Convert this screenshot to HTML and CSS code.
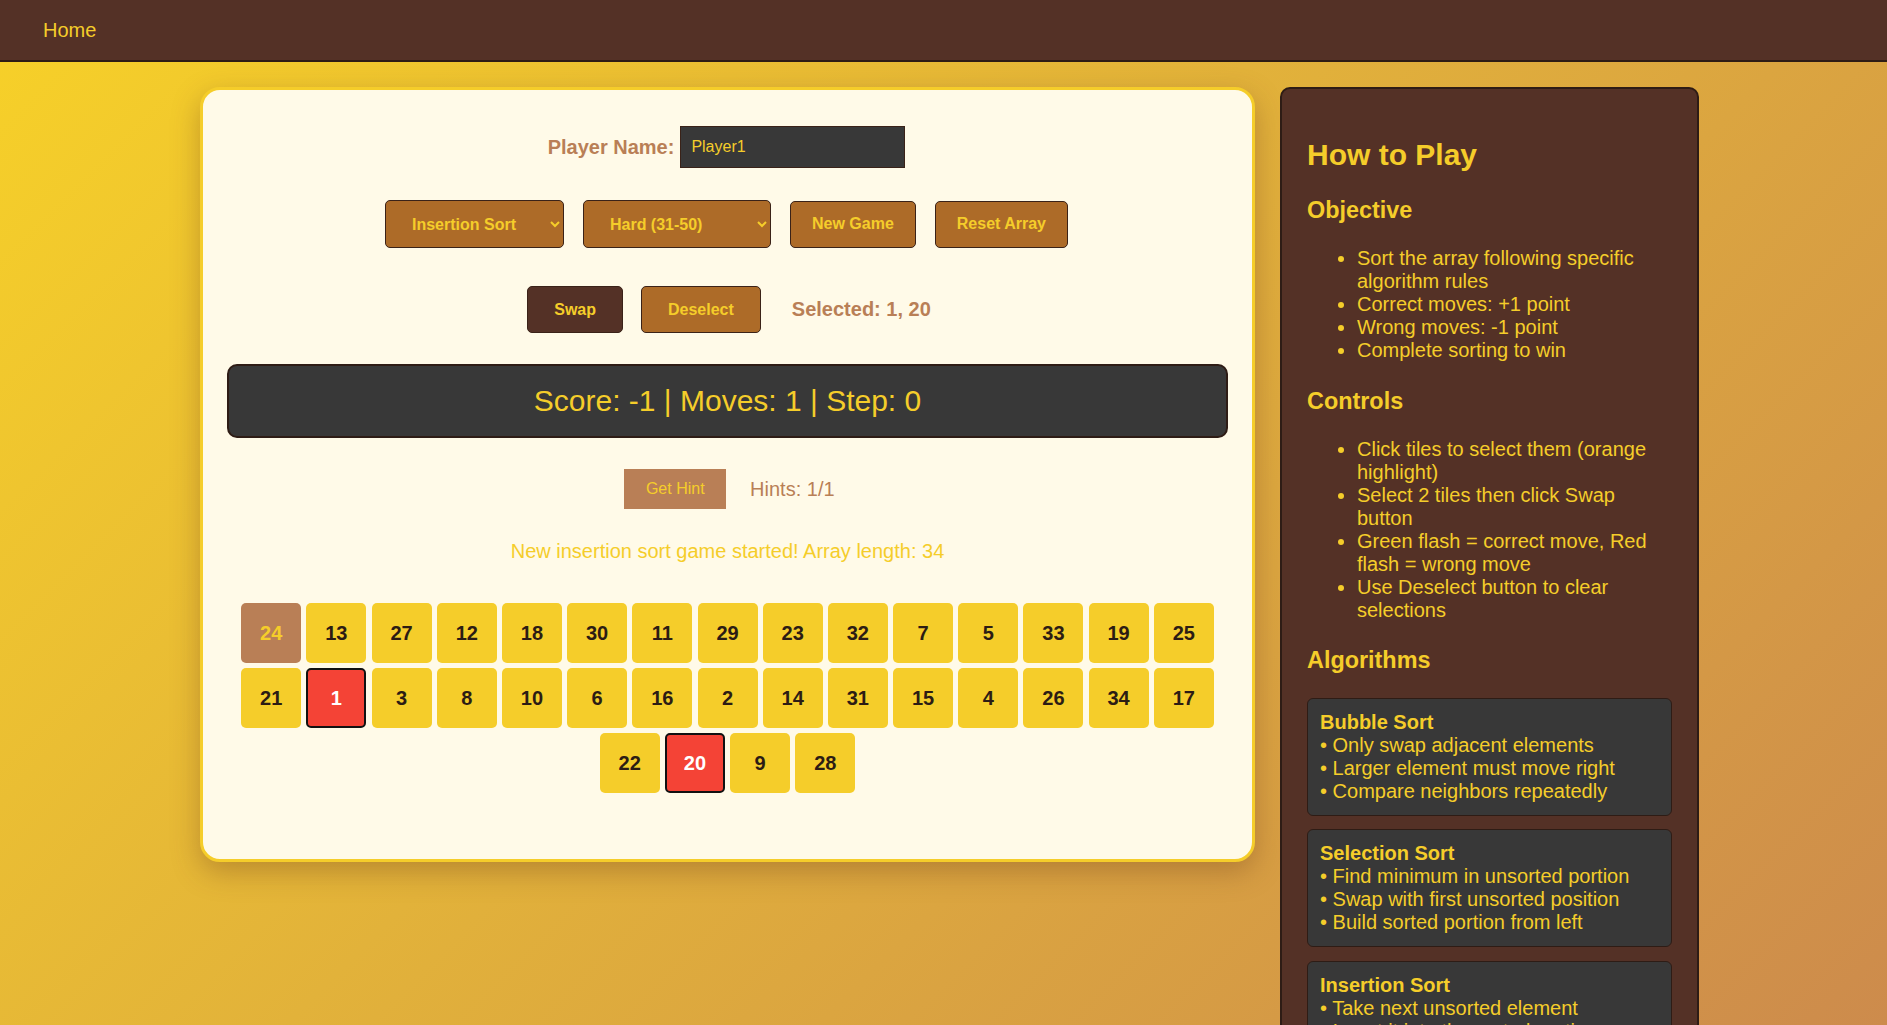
FILE: index.html
```html
<!DOCTYPE html>
<html lang="en">
<head>
<meta charset="utf-8">
<title>Sorting Game</title>
<link rel="stylesheet" href="styles.css">
</head>
<body>
<nav class="navbar">
  <a class="nav-link" href="#">Home</a>
</nav>
<div class="layout">
  <main class="game-panel">
    <div class="player-row">
      <label class="player-label" for="pname">Player Name:</label>
      <input id="pname" class="player-input" type="text" value="Player1">
    </div>
    <div class="controls-row">
      <select class="ctl-select algo-select">
        <option>Insertion Sort</option>
        <option>Bubble Sort</option>
        <option>Selection Sort</option>
      </select>
      <select class="ctl-select diff-select">
        <option>Hard (31-50)</option>
        <option>Easy (5-15)</option>
        <option>Medium (16-30)</option>
      </select>
      <button class="ctl-btn">New Game</button>
      <button class="ctl-btn">Reset Array</button>
    </div>
    <div class="action-row">
      <button class="act-btn swap-btn">Swap</button>
      <button class="act-btn deselect-btn">Deselect</button>
      <span class="selected-text">Selected: 1, 20</span>
    </div>
    <div class="score-bar">Score: -1 | Moves: 1 | Step: 0</div>
    <div class="hint-row">
      <button class="hint-btn">Get Hint</button>
      <span class="hint-count">Hints: 1/1</span>
    </div>
    <div class="message">New insertion sort game started! Array length: 34</div>
    <div class="tiles">
      <div class="tile current">24</div>
      <div class="tile">13</div>
      <div class="tile">27</div>
      <div class="tile">12</div>
      <div class="tile">18</div>
      <div class="tile">30</div>
      <div class="tile">11</div>
      <div class="tile">29</div>
      <div class="tile">23</div>
      <div class="tile">32</div>
      <div class="tile">7</div>
      <div class="tile">5</div>
      <div class="tile">33</div>
      <div class="tile">19</div>
      <div class="tile">25</div>
      <div class="tile">21</div>
      <div class="tile selected">1</div>
      <div class="tile">3</div>
      <div class="tile">8</div>
      <div class="tile">10</div>
      <div class="tile">6</div>
      <div class="tile">16</div>
      <div class="tile">2</div>
      <div class="tile">14</div>
      <div class="tile">31</div>
      <div class="tile">15</div>
      <div class="tile">4</div>
      <div class="tile">26</div>
      <div class="tile">34</div>
      <div class="tile">17</div>
      <div class="tile">22</div>
      <div class="tile selected">20</div>
      <div class="tile">9</div>
      <div class="tile">28</div>
    </div>
  </main>
  <aside class="sidebar">
    <h2 class="side-title">How to Play</h2>
    <h3 class="side-heading">Objective</h3>
    <ul class="side-list">
      <li>Sort the array following specific algorithm rules</li>
      <li>Correct moves: +1 point</li>
      <li>Wrong moves: -1 point</li>
      <li>Complete sorting to win</li>
    </ul>
    <h3 class="side-heading">Controls</h3>
    <ul class="side-list">
      <li>Click tiles to select them (orange highlight)</li>
      <li>Select 2 tiles then click Swap button</li>
      <li>Green flash = correct move, Red flash = wrong move</li>
      <li>Use Deselect button to clear selections</li>
    </ul>
    <h3 class="side-heading">Algorithms</h3>
    <div class="algo-card">
      <strong>Bubble Sort</strong><br>
      • Only swap adjacent elements<br>
      • Larger element must move right<br>
      • Compare neighbors repeatedly
    </div>
    <div class="algo-card">
      <strong>Selection Sort</strong><br>
      • Find minimum in unsorted portion<br>
      • Swap with first unsorted position<br>
      • Build sorted portion from left
    </div>
    <div class="algo-card">
      <strong>Insertion Sort</strong><br>
      • Take next unsorted element<br>
      • Insert it into the sorted portion<br>
      • Shift larger elements right
    </div>
  </aside>
</div>
</body>
</html>
```
FILE: styles.css
```css
html, body {
  margin: 0;
  padding: 0;
}
body {
  font-family: "Liberation Sans", Arial, sans-serif;
  font-size: 20px;
  min-height: 100vh;
  background: linear-gradient(135deg, #f7d128 0%, #e2b23a 45%, #cd8b4c 100%);
  background-attachment: fixed;
  padding-bottom: 40px;
  box-sizing: border-box;
}

.navbar {
  height: 60px;
  background: #543126;
  border-bottom: 2px solid #2e1c15;
  display: flex;
  align-items: center;
  padding-left: 43px;
}
.nav-link {
  color: #f5cd2a;
  font-size: 20px;
  text-decoration: none;
}

.layout {
  display: flex;
  align-items: flex-start;
  gap: 25px;
  margin: 25px 0 0 200px;
  width: 1499px;
}

.game-panel {
  box-sizing: border-box;
  width: 1055px;
  flex: none;
  background: #fffae8;
  border: 3px solid #f5cd2a;
  border-radius: 20px;
  padding: 36px 24px 66px;
  box-shadow: 0 10px 28px rgba(110, 60, 30, 0.35);
}

.player-row {
  display: flex;
  justify-content: center;
  align-items: center;
  gap: 6px;
  margin-left: -2px;
}
.player-label {
  font-weight: bold;
  font-size: 20px;
  color: #b97f56;
}
.player-input {
  box-sizing: border-box;
  width: 225px;
  height: 42px;
  background: #383838;
  border: 1px solid #3a2218;
  color: #f5cd2a;
  font-family: "Liberation Sans", Arial, sans-serif;
  font-size: 16px;
  padding: 0 10px;
  outline: none;
}

.controls-row {
  margin-top: 32px;
  display: flex;
  justify-content: center;
  align-items: center;
  gap: 19px;
  margin-left: -2px;
}
.ctl-select {
  box-sizing: border-box;
  height: 48px;
  background-color: #ad6b28;
  color: #f5cd2a;
  border: 1px solid #3a2218;
  border-radius: 5px;
  font-family: "Liberation Sans", Arial, sans-serif;
  font-weight: bold;
  font-size: 16px;
  padding: 0 4px 0 22px;
}
.algo-select { width: 179px; }
.diff-select { width: 188px; }
.ctl-btn {
  box-sizing: border-box;
  height: 47px;
  background: #ad6b28;
  color: #f5cd2a;
  border: 1px solid #3a2218;
  border-radius: 5px;
  font-family: "Liberation Sans", Arial, sans-serif;
  font-weight: bold;
  font-size: 16px;
  padding: 0 21px;
}

.action-row {
  margin-top: 38px;
  display: flex;
  justify-content: center;
  align-items: center;
  gap: 18px;
  margin-left: 3px;
}
.act-btn {
  box-sizing: border-box;
  height: 47px;
  color: #f5cd2a;
  border: 1px solid #3a2218;
  border-radius: 5px;
  font-family: "Liberation Sans", Arial, sans-serif;
  font-weight: bold;
  font-size: 16px;
  padding: 0 26px;
}
.swap-btn { background: #543126; }
.deselect-btn { background: #ad6b28; }
.selected-text {
  margin-left: 13px;
  font-weight: bold;
  font-size: 20px;
  color: #b97f56;
}

.score-bar {
  margin-top: 31px;
  background: #383838;
  border: 2px solid #2e1c15;
  border-radius: 10px;
  padding: 18px;
  line-height: 34px;
  font-size: 30px;
  color: #f5cd2a;
  text-align: center;
}

.hint-row {
  margin-top: 31px;
  display: flex;
  justify-content: center;
  align-items: center;
  gap: 24px;
  margin-left: 4px;
}
.hint-btn {
  height: 40px;
  background: #b97f56;
  color: #f5cd2a;
  border: none;
  font-family: "Liberation Sans", Arial, sans-serif;
  font-size: 16px;
  padding: 0 21.5px;
}
.hint-count {
  font-size: 20px;
  color: #b97f56;
}

.message {
  margin-top: 31px;
  font-size: 20px;
  line-height: 23px;
  color: #f5cd2a;
  text-align: center;
}

.tiles {
  margin-top: 40px;
  display: flex;
  flex-wrap: wrap;
  justify-content: center;
  gap: 5px 5.2px;
}
.tile {
  box-sizing: border-box;
  width: 60px;
  height: 60px;
  display: flex;
  align-items: center;
  justify-content: center;
  background: #f5cd2a;
  color: #2c1c14;
  border: 2px solid transparent;
  border-radius: 5px;
  font-weight: bold;
  font-size: 20px;
}
.tile.current {
  background: #b97f56;
  color: #f5cd2a;
}
.tile.selected {
  background: #f44336;
  color: #ffffff;
  border-color: #111111;
}

.sidebar {
  box-sizing: border-box;
  width: 419px;
  flex: none;
  background: #543126;
  border: 2px solid #2e1c15;
  border-radius: 10px;
  padding: 24px 25px;
  color: #f5cd2a;
}
.side-title {
  font-size: 30px;
  font-weight: bold;
  margin: 25px 0;
}
.side-heading {
  font-size: 23.4px;
  font-weight: bold;
  margin: 23.4px 0;
}
.side-list {
  padding-left: 50px;
  margin: 23.4px 0 25.2px;
  line-height: 23px;
}
.algo-card {
  background: #383838;
  border: 1px solid #2e1c15;
  border-radius: 6px;
  padding: 12px;
  margin: 0 0 13.5px;
  line-height: 23px;
}
```
